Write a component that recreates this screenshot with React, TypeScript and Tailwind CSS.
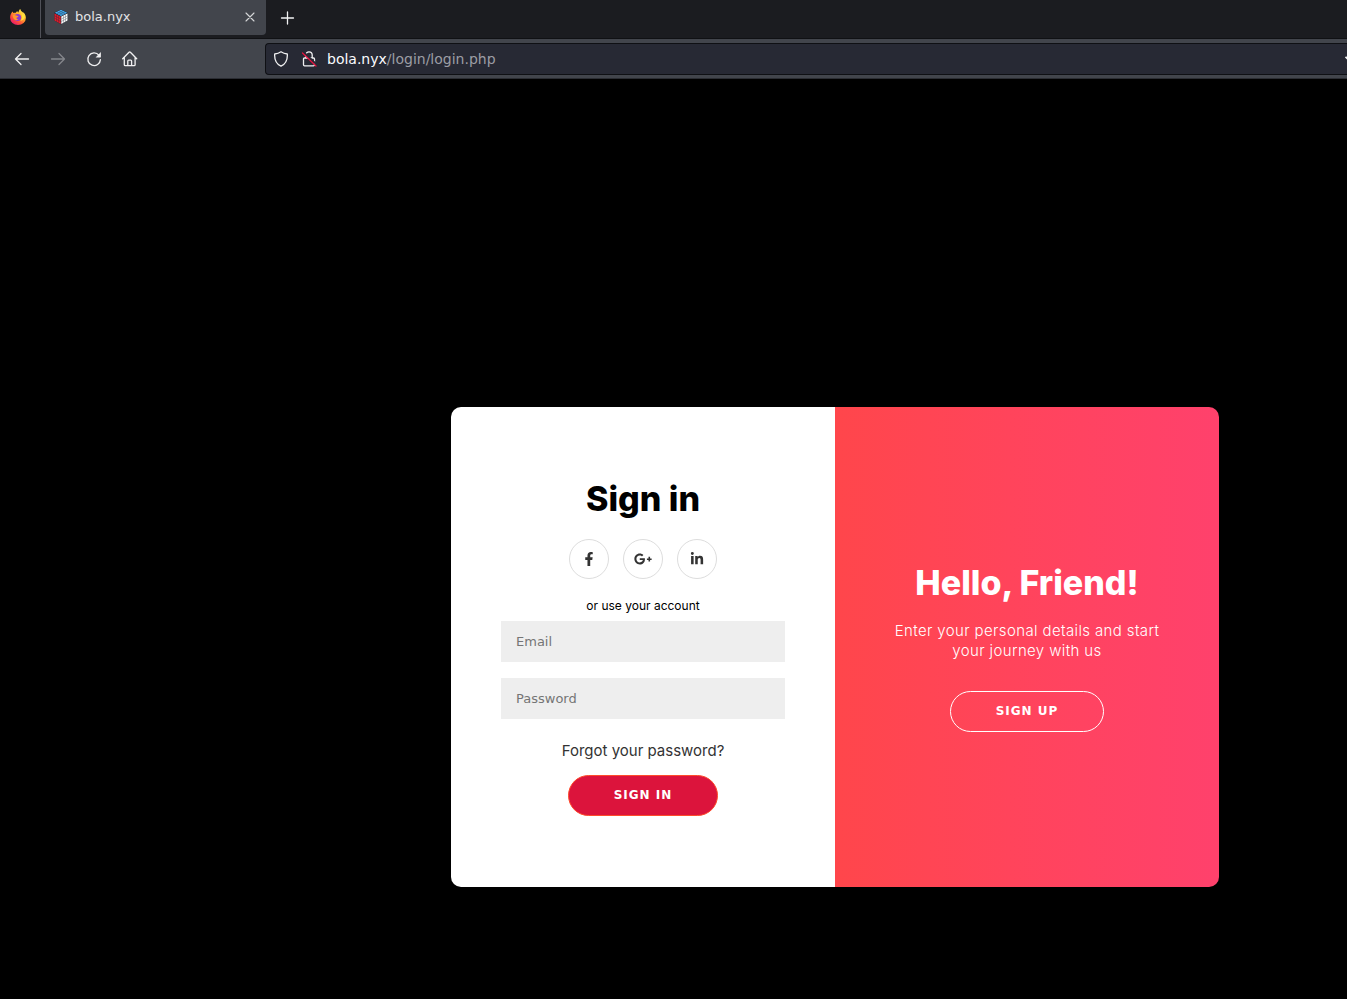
import type { ReactNode } from 'react';
import { FaFacebookF, FaGooglePlusG, FaLinkedinIn } from 'react-icons/fa';

const SOCIAL_LINKS = [
  { label: 'Facebook', icon: <FaFacebookF size={14} /> },
  { label: 'Google Plus', icon: <FaGooglePlusG size={18} /> },
  { label: 'LinkedIn', icon: <FaLinkedinIn size={14} /> },
];

function FirefoxLogo() {
  return (
    <svg viewBox="0 0 16 16" className="h-4 w-4" aria-hidden="true">
      <defs>
        <linearGradient id="flame" x1="0.85" y1="0.1" x2="0.2" y2="0.95">
          <stop offset="0" stopColor="#fff04a" />
          <stop offset="0.4" stopColor="#ffa52a" />
          <stop offset="0.7" stopColor="#ff4f3a" />
          <stop offset="1" stopColor="#e8186e" />
        </linearGradient>
      </defs>
      <path
        fill="url(#flame)"
        d="M2.4 2.600c.4.6.7 1 1.100 1.400C4.300 3.700 5 3.600 5.800 3.700 6.100 3 6.700 2.500 7.200 2.300L8.500 3.400C8.800 2 9.300.6 10.300 0c.3 1.700 1.300 2.300 2.300 3.300 1 .2 1.600.8 2.100 1.700.7 1.200 1.200 2.500 1.200 3.800A7.900 7.200 0 0 1 .1 8.800C0 6.600 1 4.500 2.400 2.600z"
      />
      <circle cx="7.600" cy="8.400" r="3.500" fill="#8a3bd0" />
      <path
        fill="#ff9a2b"
        d="M2.600 6.500c1.200-.8 2.800-.6 3.800.1.700.4 1.600.4 2.100.7-.3.900-1.500 1-2 1.500-.2 1 .8 1.800 2 1.700-1.400 1.300-4 .9-4.900-1C3.100 8.500 2.600 7.500 2.600 6.500z"
      />
      <path fill="#ffe03c" d="M9.600 3.200c1.800 1 2.700 2.900 2.500 4.900-.1 1.500-.8 2.900-1.800 3.700 3.700-.4 5.300-3.400 4.300-6.600-.8.300-3.300-.2-5-2z" />
    </svg>
  );
}

function CubeIcon() {
  return (
    <svg viewBox="0 0 16 16" className="h-4 w-4" aria-hidden="true">
      <path fill="#1d2833" d="M8 .6 14.600 3.600v8L8 15.600 1.400 11.600v-8z" />
      <path fill="#45aef5" d="M8 .8 14.200 3.800 8 6.900 1.800 3.800z" />
      <path fill="#e31b2b" d="M1.500 4.400 7.700 7.400v7.700L1.500 11.600z" />
      <path fill="#ffffff" d="M14.500 4.400 8.300 7.400v7.700l6.200-3.500z" />
      <path
        fill="none"
        stroke="#1d2833"
        strokeWidth=".35"
        d="M4 2.800 10 5.900M6 1.800l6 3M12 2.800 6 5.900M10 1.800 4 4.800M3.600 5.400v7.400M5.600 6.400v7.500M1.500 6.800l6.200 3.200M1.500 9.100l6.200 3.400M10.400 6.400v7.500M12.400 5.400v7.400M14.500 6.800l-6.200 3.200M14.500 9.100l-6.200 3.400"
      />
    </svg>
  );
}

function LineIcon({ children, className = 'h-4 w-4' }: { children: ReactNode; className?: string }) {
  return (
    <svg
      viewBox="0 0 16 16"
      className={className}
      fill="none"
      stroke="currentColor"
      strokeWidth="1.3"
      strokeLinecap="round"
      strokeLinejoin="round"
      aria-hidden="true"
    >
      {children}
    </svg>
  );
}

function TabStrip() {
  return (
    <div className="flex h-[39px] items-start border-b border-[#101114] bg-[#1b1c20]">
      <div className="flex h-[38px] w-[41px] shrink-0 items-center border-r border-[#505158] pb-1 pl-[10px]">
        <FirefoxLogo />
      </div>
      <div className="ml-1 flex h-[35px] w-[221px] shrink-0 items-center rounded-b bg-[#42454c] pb-px pl-2">
        <CubeIcon />
        <span className="ml-[6px] flex-1 text-[13px] text-[#e3e3e5]">bola.nyx</span>
        <button type="button" aria-label="Close tab" className="mr-2 text-[#d6d7d9]">
          <LineIcon>
            <path strokeWidth="1.1" d="m4 4 8 8M12 4l-8 8" />
          </LineIcon>
        </button>
      </div>
      <button type="button" aria-label="New tab" className="ml-[14px] flex h-[35px] items-center text-[#f2f2f3]">
        <LineIcon>
          <path d="M7.500 2v12M1.500 8h12" />
        </LineIcon>
      </button>
    </div>
  );
}

function NavBar() {
  return (
    <div className="flex h-10 items-center overflow-hidden border-b border-[#2b2d33] bg-[#42454c] text-[#f0f0f1]">
      <div className="flex w-[265px] shrink-0 items-center gap-5 pl-[14px]">
        <button type="button" aria-label="Back">
          <LineIcon>
            <path d="M14.500 8H1.500M7 2.500 1.500 8 7 13.500" />
          </LineIcon>
        </button>
        <button type="button" aria-label="Forward" className="text-[#84868b]">
          <LineIcon>
            <path d="M1.500 8h13M9 2.500 14.500 8 9 13.500" />
          </LineIcon>
        </button>
        <button type="button" aria-label="Reload">
          <LineIcon>
            <path d="M13 4.300A6.300 6.300 0 1 0 14.400 8.600" />
            <path fill="currentColor" stroke="none" d="M14.900 1v4.900c0 .3-.2.500-.5.500H9.600z" />
          </LineIcon>
        </button>
        <button type="button" aria-label="Home">
          <LineIcon>
            <path d="M.7 7.800 7 1.300a1 1 0 0 1 1.400 0L14.700 7.800M2.300 6.500v7.200c0 .6.400 1 1 1h8.800c.6 0 1-.4 1-1V6.500M5.800 14.500V10c0-.5.400-.9.900-.9h2c.5 0 .9.400.9.900v4.500" />
          </LineIcon>
        </button>
      </div>
      <div className="flex h-8 min-w-0 flex-1 items-center rounded-l border border-r-0 border-[#0f1014] bg-[#272934] pl-[7px] text-sm">
        <LineIcon className="h-4 w-4 shrink-0">
          <path d="M8 .8c1.800 1.300 4 2 6.300 2.200.4 5.600-1.500 9.800-6.300 12.200C3.200 12.800 1.300 8.600 1.700 3 4 2.800 6.200 2.100 8 .8z" />
        </LineIcon>
        <LineIcon className="ml-3 h-4 w-4 shrink-0">
          <path d="M4.800 7V4a3.200 3.200 0 0 1 6.400 0v3M3.500 7h9c.7 0 1 .4 1 1v5.800c0 .6-.3 1-1 1h-9c-.6 0-1-.4-1-1V8c0-.6.4-1 1-1z" />
          <path stroke="#272934" strokeWidth="2" d="m3 1.500 12.500 12" />
          <path stroke="#e8123f" strokeWidth="1.200" d="m1.500 2 13.500 13" />
        </LineIcon>
        <p className="ml-[10px] flex-1 whitespace-nowrap text-[#9c9da4]">
          <span className="text-[#fbfbfe]">bola.nyx</span>/login/login.php
        </p>
        <div className="flex w-[2px] shrink-0 overflow-hidden">
          <LineIcon className="h-4 w-4 shrink-0">
            <path fill="currentColor" d="M.7 6.300 5.500 5.500 8 1l2.500 4.500 4.800.8-3.500 3.600.8 5L8 12.700l-4.600 2.200.8-5z" />
          </LineIcon>
        </div>
      </div>
    </div>
  );
}

function SignInForm() {
  return (
    <form
      className="flex flex-col items-center justify-center bg-white px-[50px] text-center"
      onSubmit={(e) => e.preventDefault()}
    >
      <h1 className="text-[34px] leading-10 font-extrabold text-black">Sign in</h1>
      <div className="my-5 flex gap-[14px]">
        {SOCIAL_LINKS.map((link) => (
          <a
            key={link.label}
            href="#"
            aria-label={link.label}
            className="flex h-10 w-10 items-center justify-center rounded-full border border-[#dddddd] text-[#333333]"
          >
            {link.icon}
          </a>
        ))}
      </div>
      <span className="text-xs leading-[14px] text-black">or use your account</span>
      <input
        type="email"
        placeholder="Email"
        aria-label="Email"
        className="my-2 h-[41px] w-full bg-[#eeeeee] px-[15px] font-['DejaVu_Sans',sans-serif] text-[13px] text-black placeholder:text-[#757575]"
      />
      <input
        type="password"
        placeholder="Password"
        aria-label="Password"
        className="my-2 h-[41px] w-full bg-[#eeeeee] px-[15px] font-['DejaVu_Sans',sans-serif] text-[13px] text-black placeholder:text-[#757575]"
      />
      <a href="#" className="my-[14px] text-[15px] leading-5 text-[#333333]">
        Forgot your password?
      </a>
      <button
        type="submit"
        className="h-[41px] rounded-full border border-[#ff4b2b] bg-[#dc143c] px-[45px] font-['DejaVu_Sans',sans-serif] text-xs font-bold tracking-[1px] text-white uppercase"
      >
        Sign In
      </button>
    </form>
  );
}

function WelcomePanel() {
  return (
    <section className="flex flex-col items-center justify-center bg-linear-to-r from-[#ff464b] to-[#ff416c] px-[50px] text-center text-white">
      <h2 className="text-[34px] leading-10 font-extrabold">Hello, Friend!</h2>
      <p className="mt-[18px] mb-[30px] text-[15px] leading-5 font-light tracking-wide">
        Enter your personal details and start your journey with us
      </p>
      <button
        type="button"
        className="h-[41px] rounded-full border border-white px-[45px] font-['DejaVu_Sans',sans-serif] text-xs font-bold tracking-[1px] uppercase"
      >
        Sign Up
      </button>
    </section>
  );
}

export default function App() {
  return (
    <div className="flex min-h-screen flex-col bg-black">
      <header className="font-['DejaVu_Sans',sans-serif]">
        <TabStrip />
        <NavBar />
      </header>
      <main className="flex flex-1 items-start justify-center pt-[328px] pb-28 pl-[323px] font-['Inter',sans-serif]">
        <div className="grid min-h-[480px] w-full max-w-[768px] grid-cols-2 overflow-hidden rounded-[10px]">
          <SignInForm />
          <WelcomePanel />
        </div>
      </main>
    </div>
  );
}
